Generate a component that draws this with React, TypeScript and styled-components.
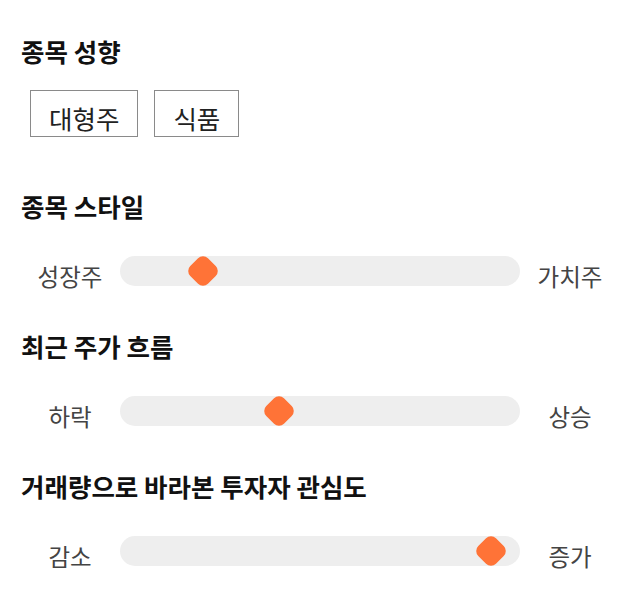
import React from "react";
import styled, { createGlobalStyle } from "styled-components";

const GlobalStyle = createGlobalStyle`
  html, body {
    margin: 0;
    padding: 0;
    background: #ffffff;
  }
  body {
    font-family: "Noto Sans CJK KR", "Noto Sans", sans-serif;
    color: #111111;
  }
`;

const Page = styled.div`
  display: flex;
  flex-direction: column;
  padding: 35px 20px 0 21px;
  width: 640px;
  box-sizing: border-box;
`;

const Section = styled.section<{ $gap: number; $after: number }>`
  display: flex;
  flex-direction: column;
  gap: ${({ $gap }) => $gap}px;
  margin-bottom: ${({ $after }) => $after}px;
`;

const Title = styled.h2`
  margin: 0;
  font-size: 25.5px;
  line-height: 32px;
  font-weight: 700;
  color: #111111;
  letter-spacing: 0;
`;

const ChipRow = styled.div`
  display: flex;
  gap: 16px;
  padding-left: 9px;
`;

const Chip = styled.button`
  box-sizing: border-box;
  height: 47px;
  padding: 8px 18px 0;
  border: 1px solid #8a8a8a;
  background: #ffffff;
  font-family: inherit;
  font-size: 25.5px;
  color: #222222;
  cursor: pointer;
  display: flex;
  align-items: center;
  justify-content: center;
`;

const SliderRow = styled.div`
  display: grid;
  grid-template-columns: 100px 1fr 100px;
  align-items: center;
  margin-left: -1px;
`;

/* text sits a little below the track's middle, so the line box is taller than the row */
const EndLabel = styled.span`
  display: block;
  height: 30px;
  text-align: center;
  font-size: 23.5px;
  line-height: 41px;
  color: #444444;
`;

const Track = styled.div`
  position: relative;
  height: 30px;
  border-radius: 15px;
  background: #eeeeee;
`;

const Thumb = styled.span`
  position: absolute;
  top: 50%;
  width: 25px;
  height: 25px;
  border-radius: 7px;
  background: #ff7337;
  transform: translate(-50%, -50%) rotate(45deg);
`;

type Slider = { title: string; low: string; high: string; value: number };

const sliders: Slider[] = [
  { title: "종목 스타일", low: "성장주", high: "가치주", value: 20.75 },
  { title: "최근 주가 흐름", low: "하락", high: "상승", value: 39.75 },
  { title: "거래량으로 바라본 투자자 관심도", low: "감소", high: "증가", value: 92.75 },
];

export default function App() {
  return (
    <>
      <GlobalStyle />
      <Page>
        <Section $gap={23} $after={53}>
          <Title>종목 성향</Title>
          <ChipRow>
            <Chip>대형주</Chip>
            <Chip>식품</Chip>
          </ChipRow>
        </Section>
        {sliders.map((s) => (
          <Section key={s.title} $gap={34} $after={44}>
            <Title>{s.title}</Title>
            <SliderRow>
              <EndLabel>{s.low}</EndLabel>
              <Track>
                <Thumb style={{ left: `${s.value}%` }} />
              </Track>
              <EndLabel>{s.high}</EndLabel>
            </SliderRow>
          </Section>
        ))}
      </Page>
    </>
  );
}
